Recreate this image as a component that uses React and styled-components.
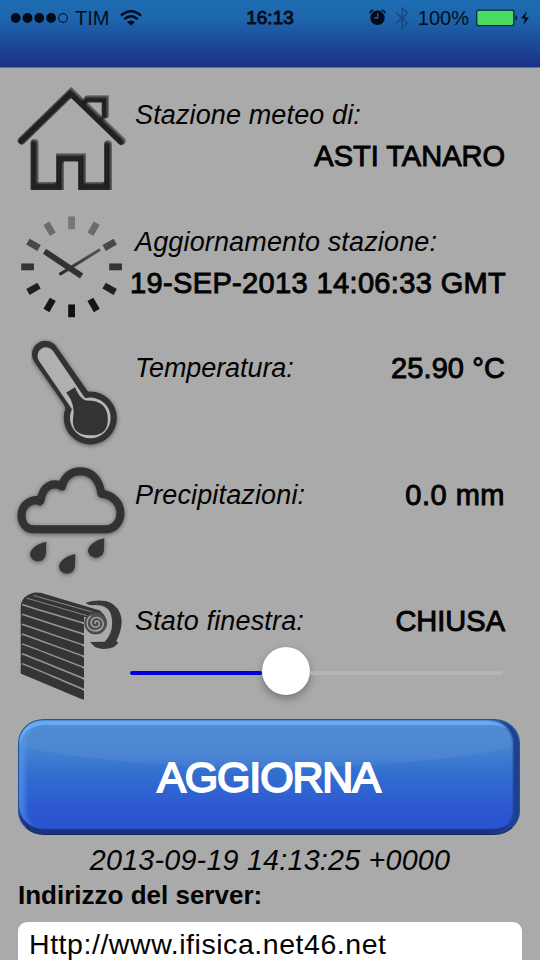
import React from "react";
import styled, { createGlobalStyle } from "styled-components";

const Global = createGlobalStyle`
  * { box-sizing: border-box; }
  body { margin: 0; background: #aaa; overflow: hidden; }
`;

const Screen = styled.main`
  width: 540px;
  height: 960px;
  overflow: hidden;
  display: flex;
  flex-direction: column;
  background: #aaaaaa;
  color: #030303;
  font-family: "Liberation Sans", Arial, sans-serif;
`;

const Header = styled.header`
  flex: none;
  height: 68px;
  background: linear-gradient(#1d6cb1 0, #1d66ae 18px, #1b3286 66px);
  border-bottom: 1px solid #67719c;
`;

const StatusBar = styled.div`
  display: grid;
  grid-template-columns: 1fr auto 1fr;
  align-items: center;
  height: 35px;
  padding: 0 11px;
  color: #020d20;
`;

const StatusGroup = styled.div`
  display: flex;
  align-items: center;
  justify-content: ${(p) => (p.$end ? "flex-end" : "flex-start")};
  svg { display: block; flex: none; }
`;

const Text = styled.span`
  display: block;
  white-space: nowrap;
  font-size: ${(p) => p.$size}px;
  line-height: 32px;
  letter-spacing: ${(p) => p.$track || 0}px;
`;

const Label = styled(Text)`
  font-style: italic;
`;

const Strong = styled(Text)`
  -webkit-text-stroke: ${(p) => p.$weight || 0.95}px currentColor;
`;

const Carrier = styled(Text)`
  margin: 0 11px 0 6px;
`;

const Percent = styled(Text)`
  margin: 0 7px 0 9px;
`;

const Readings = styled.section`
  flex: none;
  display: flex;
  flex-direction: column;
  padding: 17px 35px 0 17px;
`;

const Reading = styled.article`
  display: grid;
  grid-template-columns: 108px 1fr;
  column-gap: 5px;
  height: 126.56px;
  align-items: start;
`;

const Icon = styled.svg`
  display: block;
  width: 108px;
  height: 110px;
  overflow: visible;
`;

const Details = styled.div`
  display: flex;
  flex-direction: column;
  padding-top: 14px;
  gap: 9px;
`;

const Line = styled.div`
  display: flex;
  justify-content: ${(p) => (p.$end ? "flex-end" : "space-between")};
  height: 32px;
  padding-left: ${(p) => (p.$end ? 0 : 5)}px;
`;

const Slider = styled.div`
  display: flex;
  align-items: center;
  width: 373px;
  height: 48px;
  margin-top: 1px;
`;

const Track = styled.div`
  height: 4px;
  margin-top: 3px;
  border-radius: 2px;
  background: ${(p) => (p.$active ? "#0500d9" : "#b5b5b5")};
  width: ${(p) => (p.$active ? "132px" : "auto")};
  flex: ${(p) => (p.$active ? "none" : "1")};
`;

const Thumb = styled.div`
  flex: none;
  width: 48px;
  height: 48px;
  border-radius: 50%;
  background: #fff;
  box-shadow: 0 4px 8px rgba(0, 0, 0, 0.3), 0 0 1px rgba(0, 0, 0, 0.25);
`;

const Button = styled.button`
  flex: none;
  display: flex;
  align-items: center;
  justify-content: center;
  width: 502px;
  height: 116px;
  margin: 1px 0 0 18px;
  padding: 0 1px 0 0;
  border: 1px solid #26519b;
  border-bottom-color: #152457;
  border-radius: 26px / 24px;
  color: #fff;
  font-family: inherit;
  background:
    radial-gradient(ellipse 300px 48px at 50% 0, rgba(255, 255, 255, 0.05) 98%, transparent 100%),
    linear-gradient(#4888d0 0, #427fd0 30%, #3270d0 45%, #2d58d0 78%, #2951d0 100%);
  box-shadow: inset -6px 0 2px #1d418f, inset 0 -5px 1px #1b3282,
    inset 0 5px 1px #67abf5, inset 6px 0 5px rgba(91, 157, 240, 0.6);
`;

const Footer = styled.footer`
  display: flex;
  flex-direction: column;
  padding: 9px 18px 0;
`;

const Stamp = styled(Label)`
  align-self: center;
`;

const ServerLabel = styled(Text)`
  font-weight: bold;
  margin-top: 3px;
`;

const Field = styled.div`
  height: 56px;
  margin-top: 11px;
  padding: 6px 11px;
  border-radius: 9px;
  background: #fff;
`;

function SignalDots() {
  return (
    <svg width="58" height="12" viewBox="0 0 58 12" fill="#020a18">
      {[4.7, 16.5, 28.3, 40.1].map((x) => <circle key={x} cx={x} cy="6" r="4.9" />)}
      <circle cx="52" cy="6" r="4.4" fill="none" stroke="#020a18" strokeWidth="1" />
    </svg>
  );
}

function Wifi() {
  return (
    <svg width="22" height="16" viewBox="0 0 22 16" fill="none" stroke="#020a18">
      <path d="M1 5.6Q11-3.2 21 5.6" strokeWidth="2.4" />
      <path d="M4.3 9.2Q11 3.2 17.7 9.2" strokeWidth="2.4" />
      <path d="M7 12Q11 8.8 15 12L11 15.6Z" fill="#020a18" stroke="none" />
    </svg>
  );
}

const AlarmIcon = styled.svg`
  margin-right: 9px;
`;

function Alarm() {
  return (
    <AlarmIcon width="17" height="17" viewBox="0 0 17 17" fill="none" stroke="#020a18">
      <circle cx="8.5" cy="8.8" r="7.2" fill="#020a18" stroke="none" />
      <path d="M.7 4.2Q1.5 1.5 4.4 1M12.6 1Q15.5 1.5 16.3 4.2" strokeWidth="1.5" />
      <path d="M8.7 4.2V9H5.4" stroke="#2165a9" strokeWidth="1.3" />
    </AlarmIcon>
  );
}

function Bluetooth() {
  return (
    <svg width="14" height="22" viewBox="0 0 14 22" fill="none" stroke="#174a81" strokeWidth="1.6">
      <path d="M1.3 5.8 12.5 16 7.2 20.8V1.2L12.5 6 1.3 16.2" />
    </svg>
  );
}

function Battery() {
  return (
    <svg width="53" height="18" viewBox="0 0 53 18">
      <rect x=".7" y="1.2" width="37.2" height="15.4" rx="2" fill="#4ada62" stroke="#062a4a" strokeWidth="1.3" />
      <path d="M39.7 6.2q3 2.7 0 5.4Z" fill="#020a18" />
      <path d="M50.8 2.2 45 9.6h4L47.2 16 53 8.4h-4Z" fill="#020a18" />
    </svg>
  );
}

function House() {
  return (
    <Icon viewBox="17 85 108 110">
      <defs>
        <filter id="bevel" x="-20%" y="-20%" width="140%" height="140%">
          <feGaussianBlur in="SourceAlpha" stdDeviation="1.3" result="soft" />
          <feOffset in="soft" dx="-.6" dy=".6" result="moved" />
          <feComposite in="SourceAlpha" in2="moved" operator="out" result="edge" />
          <feFlood floodColor="#858585" floodOpacity=".7" />
          <feComposite in2="edge" operator="in" result="light" />
          <feMerge>
            <feMergeNode in="SourceGraphic" />
            <feMergeNode in="light" />
          </feMerge>
        </filter>
        <filter id="halo" x="-20%" y="-20%" width="140%" height="140%">
          <feDropShadow dx="0" dy="1" stdDeviation="2.3" floodColor="#222" floodOpacity=".65" />
        </filter>
      </defs>
      <g fill="none" stroke="#242424" filter="url(#bevel)">
        <path d="M87.5 99H105.2V115" strokeWidth="7" strokeLinecap="round" />
        <path d="M21.8 140.5 71.3 92.5 121.5 141" strokeWidth="8" strokeLinecap="round" />
        <path d="M34.5 143V186H60V157.5H82V186H108V144.5" strokeWidth="7.8" strokeLinecap="round" />
      </g>
    </Icon>
  );
}

function Clock() {
  const tones = ["#777", "#6b6b6b", "#484848", "#343434", "#202020", "#151515", "#111", "#151515", "#202020", "#343434", "#484848", "#6b6b6b"];
  return (
    <Icon viewBox="17 211.56 108 110">
      <defs>
        <linearGradient id="hand" x2="0" y2="1">
          <stop stopColor="#595959" />
          <stop offset="1" stopColor="#282828" />
        </linearGradient>
      </defs>
      {tones.map((tone, i) => (
        <rect key={i} x="68.2" y="216" width="6.8" height="12.8" fill={tone} transform={`rotate(${i * 30} 71.6 266.4)`} />
      ))}
      <path d="M58.5 272.8 99.3 247.8 100.7 250.4 60.5 275.4Z" fill="url(#hand)" />
      <path d="M46 248.3 83.2 273 80 278 43 253.4Z" fill="#323232" />
    </Icon>
  );
}

function Thermometer() {
  return (
    <Icon viewBox="17 338.12 108 110">
      <g filter="url(#halo)" fill="#303030" stroke="#303030">
        <path d="M45.5 354.5 85 411" strokeWidth="27" strokeLinecap="round" />
        <path d="M76 386Q82 395 94 392L68 421Q67 407 60 397Z" stroke="none" />
        <circle cx="90.3" cy="418" r="26.5" stroke="none" />
      </g>
      <path d="M46 356 80 406" stroke="#b0b0b0" strokeWidth="17" strokeLinecap="round" />
      <path d="M76 392Q83 400 92 398L72 417Q75 407 66 399Z" fill="#b8b8b8" />
      <circle cx="90.3" cy="418" r="20.3" fill="#b8b8b8" />
      <path d="M66.3 392.7 75 387.3Q79 398 86 400.6Q107 400 107.8 418T90 435.4T73 419Q76 405 66.3 392.7Z" fill="#333" />
    </Icon>
  );
}

function RainCloud() {
  return (
    <Icon viewBox="17 464.68 108 110">
      <g filter="url(#halo)">
        <path
          d="M34 529H105C115 529 120.5 521 120.5 513C120.5 502 112 494.5 101.5 493.5C99 478 91 471 80.5 471C71 471 64 477 62 486C52 481 43 486 40.5 500C29 498 21.5 506 21.5 515C21.5 524 27 529 34 529Z"
          fill="none" stroke="#303030" strokeWidth="8" strokeLinejoin="round"
        />
        <path d="M40 500.5 39 505M61.5 485.5 59 489" stroke="#303030" strokeWidth="5" />
        {[[0, 0], [29, 12.3], [58, -3.6]].map(([x, y]) => (
          <path key={x} transform={`translate(${x} ${y})`} d="M46.3 541.5C36 544 30 549 30 554.5A8 7.7 0 0 0 45.8 554.5Z" fill="#353535" />
        ))}
      </g>
    </Icon>
  );
}

function Blinds() {
  const seams = [0, 1, 2, 3, 4, 5, 6];
  return (
    <Icon viewBox="51 33.7 324 330">
      <defs>
        <filter id="soften" x="-10%" y="-10%" width="120%" height="120%">
          <feGaussianBlur stdDeviation="1.5" />
        </filter>
      </defs>
      <g filter="url(#soften)">
        <path d="M62 75Q68 45 104 38L122 39L300 92L316 110L252 112V360L242 357L62 281Z" fill="#363636" />
        {seams.map((i) => (
          <path
            key={i}
            d={`M66 ${74 + i * 29.6}C90 ${82 + i * 29.6} 190 ${112 + i * 32} 255 ${131 + i * 33.3}`}
            fill="none" stroke="#979797" strokeWidth="4.5"
          />
        ))}
        {seams.map((i) => (
          <path key={i} d={`M244 ${128 + i * 33.3}L257 ${128 + i * 33.3}V${138 + i * 33.3}Z`} fill="#aaa" />
        ))}
        {seams.map((i) => <circle key={i} cx="60" cy={78 + i * 29.6} r="3" fill="#aaa" />)}
        <path d="M80 55 262 108M100 47 278 97" stroke="#858585" strokeWidth="3" />
      </g>
      <g fill="none">
        <circle cx="287" cy="130" r="33" fill="#505050" stroke="#363636" strokeWidth="2" />
        <path d="M287 132C280 126 292 118 298 129C302 143 280 147 275 135C268 116 290 106 304 119C319 137 301 156 282 153C257 150 256 119 273 108" stroke="#aaa" strokeWidth="4" />
      </g>
      <path filter="url(#soften)" d="M257 69Q286 59 318 64Q348 72 360 100Q374 133 349 184L355 190L342 202Q310 214 285 202L270 187L314 186Q342 157 335 115Q331 76 284 76Q264 78 257 69Z" fill="#393939" />
    </Icon>
  );
}

export default function App() {
  return (
    <>
      <Global />
      <Screen>
        <Header>
          <StatusBar>
            <StatusGroup>
              <SignalDots />
              <Carrier $size={20}>TIM</Carrier>
              <Wifi />
            </StatusGroup>
            <Strong $size={19}>16:13</Strong>
            <StatusGroup $end>
              <Alarm />
              <Bluetooth />
              <Percent $size={20}>100%</Percent>
              <Battery />
            </StatusGroup>
          </StatusBar>
        </Header>
        <Readings>
          <Reading>
            <House />
            <Details>
              <Line><Label $size={27} $track={0.13}>Stazione meteo di:</Label></Line>
              <Line $end><Strong $size={29}>ASTI TANARO</Strong></Line>
            </Details>
          </Reading>
          <Reading>
            <Clock />
            <Details>
              <Line><Label $size={27} $track={0.15}>Aggiornamento stazione:</Label></Line>
              <Line $end><Strong $size={29} $track={0.36}>19-SEP-2013 14:06:33 GMT</Strong></Line>
            </Details>
          </Reading>
          <Reading>
            <Thermometer />
            <Details>
              <Line><Label $size={27} $track={-0.07}>Temperatura:</Label><Strong $size={29} $track={0.1}>25.90 °C</Strong></Line>
            </Details>
          </Reading>
          <Reading>
            <RainCloud />
            <Details>
              <Line><Label $size={27} $track={0.14}>Precipitazioni:</Label><Strong $size={29} $track={0.5}>0.0 mm</Strong></Line>
            </Details>
          </Reading>
          <Reading>
            <Blinds />
            <Details>
              <Line><Label $size={27} $track={0.16}>Stato finestra:</Label><Strong $size={29}>CHIUSA</Strong></Line>
              <Slider>
                <Track $active />
                <Thumb />
                <Track />
              </Slider>
            </Details>
          </Reading>
        </Readings>
        <Button><Strong $size={43} $track={-1.15} $weight={1.9}>AGGIORNA</Strong></Button>
        <Footer>
          <Stamp $size={28.7} $track={0.22}>2013-09-19 14:13:25 +0000</Stamp>
          <ServerLabel $size={26}>Indirizzo del server:</ServerLabel>
          <Field><Text $size={28.5} $track={0.55}>Http://www.ifisica.net46.net</Text></Field>
        </Footer>
      </Screen>
    </>
  );
}
